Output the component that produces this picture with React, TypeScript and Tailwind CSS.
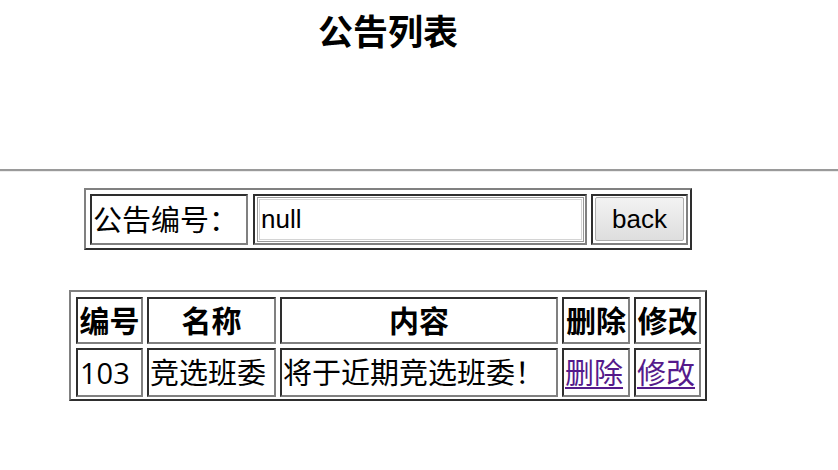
import React from "react";

const CJK = "font-['Open_Sans','Noto_Sans_CJK_SC',sans-serif]";
const LATIN = "font-['Liberation_Sans','Noto_Sans_CJK_SC',sans-serif]";

// 表格外框：左上淺、右下深；儲存格相反
const OUTER = "border-2 border-t-[#808080] border-l-[#808080] border-b-[#2e2e2e] border-r-[#2e2e2e]";
const CELL = "border-2 border-t-[#2e2e2e] border-l-[#2e2e2e] border-b-[#808080] border-r-[#808080]";

const HEADERS = ["编号", "名称", "内容", "删除", "修改"];

const ROWS = [{ id: "103", name: "竞选班委", content: "将于近期竞选班委！" }];

export default function App() {
  return (
    <div className={`w-[838px] h-[470px] bg-white text-black overflow-hidden ${CJK}`}>
      {/* Title */}
      <div className="w-[776px] h-[169px] flex justify-center pt-[12px]">
        <h2 className="text-[35px] font-bold leading-[40px]">公告列表</h2>
      </div>

      {/* hr */}
      <div className="h-[2px] bg-[#9a9a9a]" />
      <div className="h-px bg-[#ececec]" />

      <div className="w-[776px] flex flex-col items-center pt-[16px]">
        {/* Search form */}
        <div className={`w-[608px] h-[62px] flex gap-[4px] pl-[4px] pt-[4px] ${OUTER}`}>
          <div className={`w-[158px] h-[51px] flex items-center pl-[1px] text-[29px] leading-[34px] whitespace-nowrap ${CELL}`}>
            公告编号：
          </div>
          <div className={`ml-[1px] w-[334px] h-[51px] flex px-[1px] py-[1px] ${CELL}`}>
            <div
              className={`ml-[1px] flex-1 h-[45px] flex items-center pl-[3px] border border-[#999] shadow-[inset_0_0_0_1px_#fff,inset_0_0_0_2px_#d4d4d4] text-[26px] ${LATIN}`}
            >
              null
            </div>
          </div>
          <div className={`w-[97px] h-[51px] flex px-[2px] py-[1px] ${CELL}`}>
            <button
              className={`flex-1 h-[44px] flex items-center justify-center border border-[#adadad] rounded-[2px] bg-gradient-to-b from-[#f3f3f3] to-[#dedede] text-[26px] ${LATIN}`}
            >
              back
            </button>
          </div>
        </div>

        {/* Notice table */}
        <div className={`mt-[40px] w-[638px] h-[111px] pl-[5px] pt-[5px] ${OUTER}`}>
          <div className="grid grid-cols-[67px_129px_278px_68px_67px] grid-rows-[47px_49px] gap-[4px]">
            {HEADERS.map((h) => (
              <div
                key={h}
                className={`flex items-center justify-center text-[30px] font-bold leading-[34px] whitespace-nowrap ${CELL}`}
              >
                {h}
              </div>
            ))}
            {ROWS.map((r) => (
              <React.Fragment key={r.id}>
                <div className={`flex items-center pl-[2px] text-[29px] leading-[34px] ${CELL}`}>{r.id}</div>
                <div className={`flex items-center pl-[1px] text-[29px] leading-[34px] whitespace-nowrap ${CELL}`}>{r.name}</div>
                <div className={`flex items-center pl-[1px] text-[29px] leading-[34px] whitespace-nowrap ${CELL}`}>{r.content}</div>
                <div className={`flex items-center pl-[1px] text-[29px] leading-[34px] ${CELL}`}>
                  <a href="#" className="text-[#551a8b] underline underline-offset-[3px] whitespace-nowrap">删除</a>
                </div>
                <div className={`flex items-center pl-[1px] text-[29px] leading-[34px] ${CELL}`}>
                  <a href="#" className="text-[#551a8b] underline underline-offset-[3px] whitespace-nowrap">修改</a>
                </div>
              </React.Fragment>
            ))}
          </div>
        </div>
      </div>
    </div>
  );
}
